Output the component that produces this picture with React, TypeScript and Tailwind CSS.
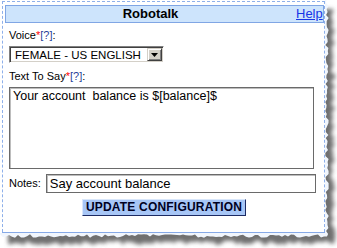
import React from "react";

function rng(seed: number) {
  let s = seed;
  return () => {
    s = (s * 9301 + 49297) % 233280;
    return s / 233280;
  };
}

function jaggedRect(x0: number, y0: number, x1: number, y1: number, amp: number, seed: number) {
  const r = rng(seed);
  const pts: string[] = [];
  pts.push(`${x0},${y0}`);
  pts.push(`${x1},${y0}`);
  for (let y = y0; y <= y1; y += 3) {
    pts.push(`${(x1 + (r() - 0.5) * amp * 2).toFixed(1)},${y}`);
  }
  for (let x = x1; x >= x0; x -= 3) {
    pts.push(`${x},${(y1 + (r() - 0.5) * amp * 2).toFixed(1)}`);
  }
  pts.push(`${x0},${y1}`);
  return "M" + pts.join(" L") + " Z";
}

const shadowPath = jaggedRect(8, 9, 333, 243, 2.5, 7);
const pagePath = jaggedRect(0, 0, 327, 236, 1.8, 3);

export default function App() {
  return (
    <div
      className="relative w-[337px] h-[248px] overflow-hidden bg-white text-black"
      style={{ fontFamily: '"Liberation Sans", Arial, sans-serif' }}
    >
      <svg className="absolute left-0 top-0" width="337" height="248" aria-hidden="true">
        <defs>
          <filter id="blur" x="-10%" y="-10%" width="120%" height="120%">
            <feGaussianBlur stdDeviation="2.2" />
          </filter>
        </defs>
        <path d={shadowPath} fill="#6f6f6f" filter="url(#blur)" />
        <path d={pagePath} fill="#f1f6fd" />
        <rect x="0" y="0" width="325" height="233" fill="#ffffff" />
      </svg>

      <div className="relative ml-[2px] mt-[1px] w-[323px] h-[231px] border border-b-0 border-dashed border-[#8eb0ea] bg-white pl-[2px] pt-[3px] shadow-[0_1px_0_#86a9e6]">
        {/* header */}
        <div className="flex h-[18px] items-center border border-[#80a6e4] bg-[#cde4fc]">
          <div className="flex-1 text-center text-[13px] font-bold leading-[16px]">Robotalk</div>
          <div className="w-[28px] pl-[1px] text-[13px] leading-[16px]">
            <a className="text-[#1736e6] underline">Help</a>
          </div>
        </div>

        <div className="pl-[4px]">
          {/* Voice */}
          <div className="mt-[6px] text-[11px] leading-[13px]">
            Voice<span className="text-[#ff0000]">*</span>
            <span className="text-[#1f3f9a]">[?]</span>:
          </div>
          <div className="mt-[4px] flex h-[17px] w-[155px] border border-t-[#808080] border-l-[#808080] border-r-white border-b-white shadow-[inset_1px_1px_0_#404040,inset_-1px_-1px_0_#d4d0c8]">
            <div className="flex-1 pl-[5px] pt-[1px] text-[11.5px] leading-[14px]">FEMALE - US ENGLISH</div>
            <div className="my-[1px] mr-[1px] flex w-[15px] items-center justify-center border border-t-[#d4d0c8] border-l-[#d4d0c8] border-r-[#404040] border-b-[#404040] bg-[#d4d0c8] shadow-[inset_1px_1px_0_#ffffff,inset_-1px_-1px_0_#808080]">
              <svg width="7" height="4" viewBox="0 0 7 4">
                <path d="M0 0 H7 L3.5 4 Z" fill="#000" />
              </svg>
            </div>
          </div>

          {/* Text To Say */}
          <div className="mt-[7px] text-[11px] leading-[13px]">
            Text To Say<span className="text-[#ff0000]">*</span>
            <span className="text-[#1f3f9a]">[?]</span>:
          </div>
          <div className="mt-[4px] h-[82px] w-[305px] border border-[#6a6a6a] pl-[3px] pt-[1px] text-[12.5px] leading-[15px] shadow-[inset_1px_1px_0_#bdbdbd]">
            Your account&nbsp; balance is $[balance]$
          </div>

          {/* Notes */}
          <div className="mt-[5px] flex items-center gap-[5px]">
            <span className="text-[11px] leading-[13px]">Notes:</span>
            <div className="h-[19px] w-[270px] border border-[#6a6a6a] pl-[3px] text-[13px] leading-[17px] shadow-[inset_1px_1px_0_#bdbdbd]">
              Say account balance
            </div>
          </div>

          {/* Button */}
          <div className="mt-[6px] flex justify-center pr-[5px]">
            <div className="flex h-[17px] w-[164px] items-center justify-center border border-t-[#d9e7fb] border-l-[#d9e7fb] border-r-[#1c2a63] border-b-[#1c2a63] bg-[#a7c6f6] text-[12px] font-bold leading-[15px] tracking-[0.2px] text-[#000022]">
              UPDATE CONFIGURATION
            </div>
          </div>
        </div>
      </div>
    </div>
  );
}
